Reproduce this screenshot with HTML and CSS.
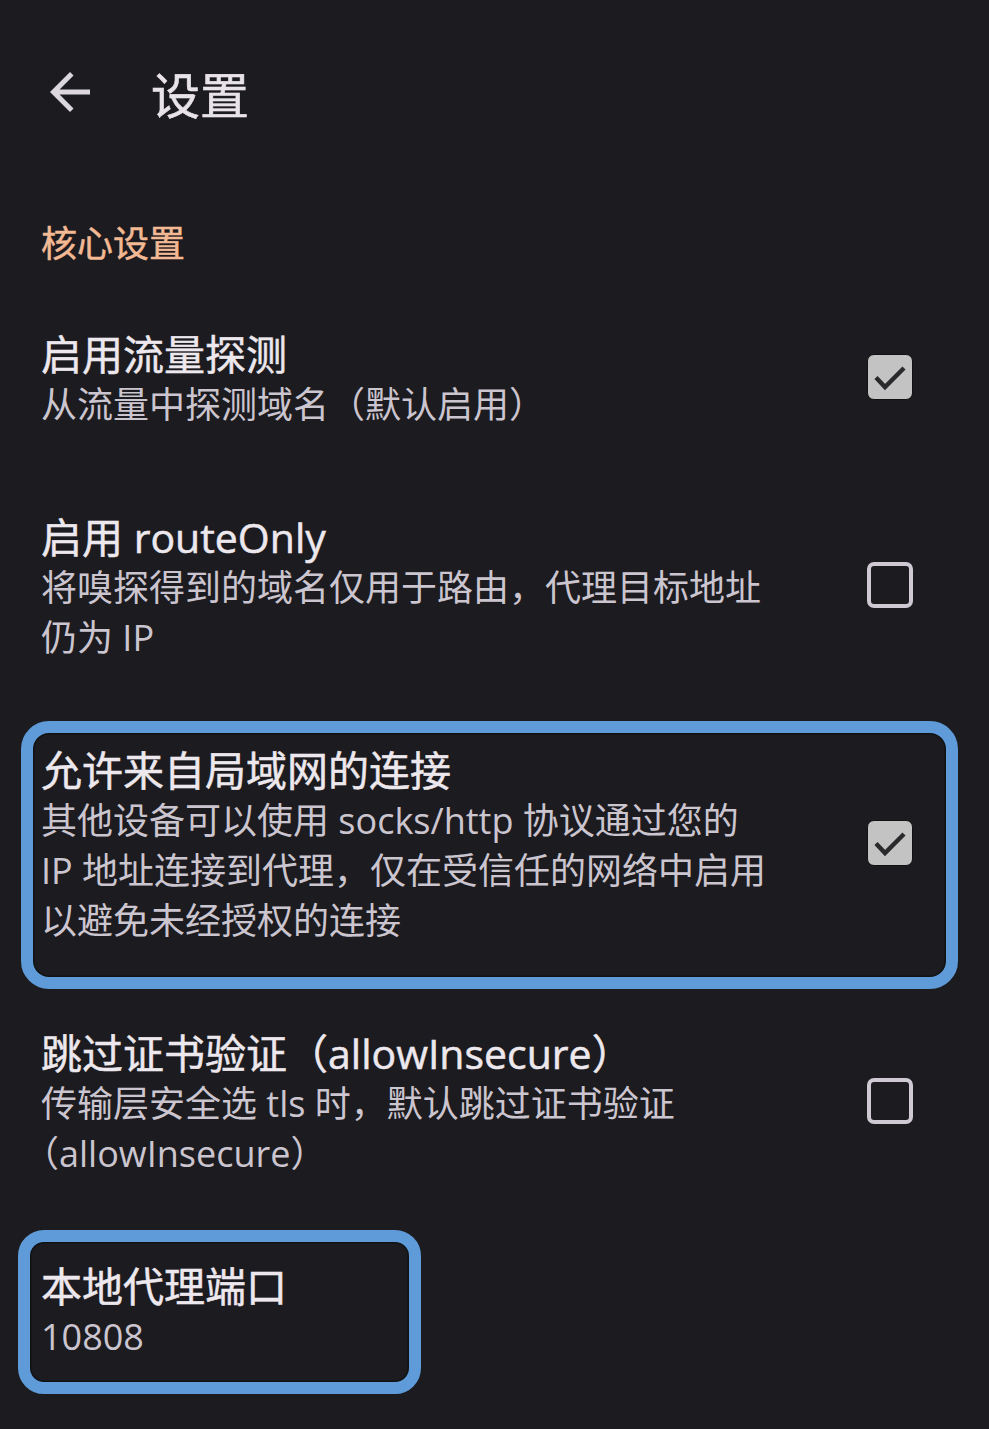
FILE: index.html
```html
<!DOCTYPE html>
<html lang="zh-CN">
<head>
<meta charset="utf-8">
<title>设置</title>
<link rel="stylesheet" href="styles.css">
</head>
<body>
<div class="screen">
  <header class="topbar">
    <svg class="back" viewBox="0 0 24 24" width="60" height="60" aria-hidden="true">
      <path d="M20 11H7.83l5.59-5.59L12 4l-8 8 8 8 1.41-1.41L7.83 13H20v-2z" fill="#dcd7df"/>
    </svg>
    <h1 class="title">设置</h1>
  </header>

  <h2 class="section">核心设置</h2>

  <ul class="list">
    <li class="item">
      <div class="text">
        <div class="item-title">启用流量探测</div>
        <div class="item-sub">从流量中探测域名（默认启用）</div>
      </div>
      <span class="cb checked"><svg viewBox="0 0 46 46" width="46" height="46" aria-hidden="true"><path d="M9 23.5l9 9.5L37 14" fill="none" stroke="#2a2a2c" stroke-width="4.4"/></svg></span>
    </li>
    <li class="item">
      <div class="text">
        <div class="item-title">启用 routeOnly</div>
        <div class="item-sub">将嗅探得到的域名仅用于路由，代理目标地址仍为 IP</div>
      </div>
      <span class="cb"></span>
    </li>
    <li class="item hl hl-a">
      <div class="text">
        <div class="item-title">允许来自局域网的连接</div>
        <div class="item-sub">其他设备可以使用 socks/http 协议通过您的 IP 地址连接到代理，仅在受信任的网络中启用以避免未经授权的连接</div>
      </div>
      <span class="cb checked"><svg viewBox="0 0 46 46" width="46" height="46" aria-hidden="true"><path d="M9 23.5l9 9.5L37 14" fill="none" stroke="#2a2a2c" stroke-width="4.4"/></svg></span>
    </li>
    <li class="item">
      <div class="text">
        <div class="item-title">跳过证书验证（allowInsecure）</div>
        <div class="item-sub">传输层安全选 tls 时，默认跳过证书验证（allowInsecure）</div>
      </div>
      <span class="cb"></span>
    </li>
    <li class="item hl hl-b">
      <div class="text">
        <div class="item-title">本地代理端口</div>
        <div class="item-sub">10808</div>
      </div>
    </li>
  </ul>
</div>
</body>
</html>
```

FILE: styles.css
```css
*, *::before, *::after { box-sizing: border-box; }
html, body {
  margin: 0;
  padding: 0;
  background: #1c1b1f;
}
body {
  font-family: "Open Sans", "Noto Sans CJK SC", sans-serif;
  color: #e6e1e5;
  width: 989px;
  height: 1429px;
  overflow: hidden;
}
.screen {
  width: 989px;
}
.topbar {
  height: 190px;
  display: flex;
  align-items: center;
  padding-left: 40px;
}
.back {
  display: block;
  margin-top: -6px;
}
.title {
  margin: 0 0 0 51px;
  font-size: 49px;
  font-weight: 400;
  line-height: 60px;
  color: #e8e3e8;
  -webkit-text-stroke: 0.6px currentColor;
}
.section {
  margin: 30px 0 20px;
  padding-left: 41px;
  font-size: 36px;
  line-height: 48px;
  font-weight: 400;
  color: #f2b994;
  -webkit-text-stroke: 0.5px currentColor;
}
.list {
  list-style: none;
  margin: 0;
  padding: 0;
}
.item {
  position: relative;
  display: flex;
  align-items: center;
  padding: 40px 76px 41px 41px;
  gap: 96px;
}
.text {
  flex: 1;
  min-width: 0;
}
.item-title {
  font-size: 41px;
  line-height: 52px;
  font-weight: 400;
  color: #ede8ed;
  -webkit-text-stroke: 0.5px currentColor;
}
.item-sub {
  font-size: 36px;
  line-height: 50px;
  color: #cbc5cf;
  text-spacing-trim: trim-start;
}
.cb {
  flex: 0 0 46px;
  width: 46px;
  height: 46px;
  border-radius: 7px;
  border: 4px solid #cfc9d4;
  margin-bottom: 5px;
  display: flex;
  align-items: center;
  justify-content: center;
  overflow: hidden;
}
.cb svg {
  display: block;
  flex: 0 0 46px;
}
.cb.checked {
  background: #c3c3c3;
  border: 1.5px solid #111;
}
.hl::after {
  content: "";
  position: absolute;
  border: 12px solid #5e9bd8;
  box-shadow: inset 0 0 0 1.5px #111214;
  pointer-events: none;
}
.hl-a::after {
  left: 21px;
  right: 31px;
  top: 17px;
  bottom: -2px;
  border-radius: 28px;
}
.hl-b::after {
  left: 18px;
  width: 403px;
  top: 10px;
  bottom: 9px;
  border-radius: 26px;
}
```
